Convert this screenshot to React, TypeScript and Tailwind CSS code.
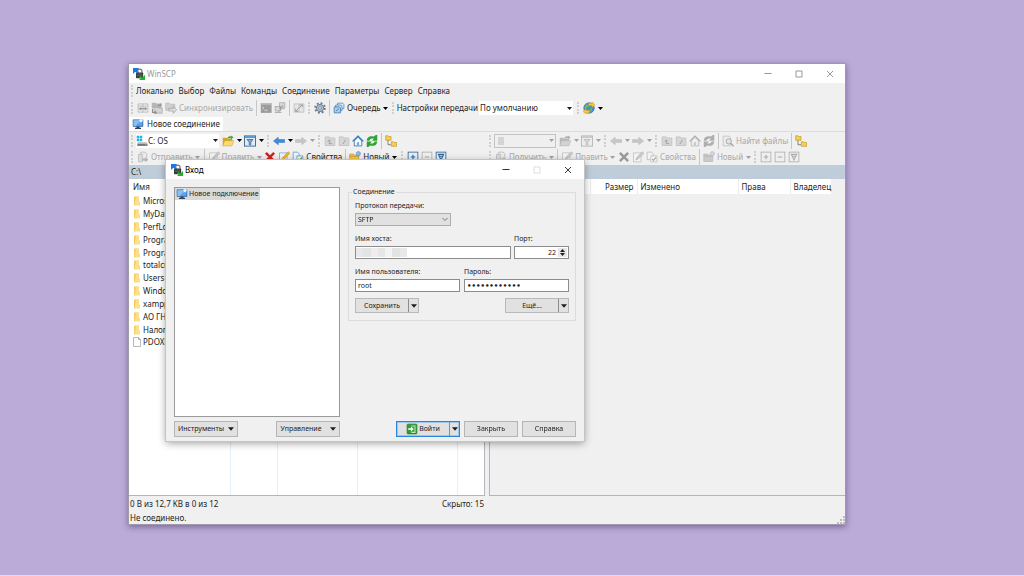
import React, { useState } from "react";
import { clsx } from "clsx";

type IconProps = { off?: boolean };

const svgProps = {
  viewBox: "0 0 16 16",
  className: "h-3 w-3 shrink-0",
  "aria-hidden": true,
} as const;

function AppIcon() {
  return (
    <svg {...svgProps}>
      <path d="M0 0h8L6 3l2 3-2 1-3-2-3 3z" fill="#1677e8" />
      <path d="M6 7V4.500a3 3 0 0 1 6 0V7" fill="none" stroke="#777" strokeWidth="1.600" />
      <rect x="4" y="6" width="9.500" height="7.500" rx="1" fill="#3a3a3a" />
      <path d="M5 8h7M5 10h7" stroke="#777" strokeWidth=".7" />
      <path d="M16 16H8l2-2-2-2 2-1.500 3 2L16 9z" fill="#19b52c" />
    </svg>
  );
}

function MonitorIcon() {
  return (
    <svg {...svgProps}>
      <path d="M6 11h4v2h2v1.500H4V13h2z" fill="#38414d" />
      <rect x="1" y="2" width="14" height="9.500" rx=".8" fill="#2d5f9e" />
      <rect x="2" y="3" width="12" height="7.500" fill="#5aa5ef" />
      <path d="M2 3h9l-6 7.500H2z" fill="#85c0f8" />
      <path d="M12 0l1 2 2 .5-1.500 1.500.5 2-2-1-2 1 .5-2L9 2.500 11 2z" fill="#f4f6f8" />
    </svg>
  );
}

function CompareIcon() {
  return (
    <svg {...svgProps}>
      <path d="M1.500 2.500h13v11h-13zM8 2.500v11M1.500 5.500h13" fill="#ededed" stroke="#b2b2b2" />
      <path d="M2.500 9h11M5 7v4M11 7v4" stroke="#8e8e8e" strokeWidth="1.400" />
    </svg>
  );
}

function SyncFoldersIcon() {
  return (
    <svg {...svgProps}>
      <path d="M1 1h5l1 1h7v6H1z" fill="#b6b6b6" />
      <path d="M4 7h5l1 1h5v7H4z" fill="#d4d4d4" stroke="#a0a0a0" strokeWidth=".8" />
      <path d="M2 9v5h5M5 12l2 2-2 1.500M9 4.500h4V2" fill="none" stroke="#8f8f8f" strokeWidth="1.500" />
    </svg>
  );
}

function SyncIcon() {
  return (
    <svg {...svgProps}>
      <path d="M1 1.500h5L7 3h6v8H1z" fill="#cfcfcf" stroke="#b0b0b0" strokeWidth=".8" />
      <path d="M5 8.500h6V5.500l4.500 5L11 15v-3H5z" fill="#dedede" stroke="#a0a0a0" />
    </svg>
  );
}

function TerminalIcon() {
  return (
    <svg {...svgProps}>
      <rect x="1" y="1.500" width="14.500" height="13" fill="#9b9b9b" />
      <path d="M1 1.500h14.500v2H1z" fill="#c0c0c0" />
      <path d="M3 6l2 2-2 2M6 11h4" fill="none" stroke="#e6e6e6" strokeWidth="1.100" />
    </svg>
  );
}

function PuttyIcon() {
  return (
    <svg {...svgProps}>
      <rect x="7.500" y="1" width="7" height="6" fill="#d8d8d8" stroke="#a5a5a5" />
      <rect x="1.500" y="6" width="7" height="6" fill="#d8d8d8" stroke="#a5a5a5" />
      <path d="M12 5L7 8l3 1-4 4" fill="none" stroke="#989898" strokeWidth="1.300" />
      <path d="M9.500 9h5M1 14h9" stroke="#b0b0b0" strokeWidth="1.500" />
    </svg>
  );
}

function SyncBrowseIcon() {
  return (
    <svg {...svgProps}>
      <path d="M1.500 2.500h13v11h-13zM8 2.500v11" fill="#e6e6e6" stroke="#b8b8b8" />
      <path d="M3.500 12.500l9-9M9 4h3.500v3M7 12.500H3.500V9" fill="none" stroke="#9e9e9e" strokeWidth="1.300" />
    </svg>
  );
}

function GearIcon() {
  return (
    <svg {...svgProps}>
      <circle cx="8" cy="8" r="6.500" fill="none" stroke="#66788c" strokeWidth="2.400" strokeDasharray="2.550 2.550" />
      <circle cx="8" cy="8" r="4.800" fill="#b6c4d2" stroke="#66788c" strokeWidth="1.300" />
      <circle cx="8" cy="8" r="1.900" fill="#f0f0f0" stroke="#66788c" />
    </svg>
  );
}

function QueueIcon() {
  return (
    <svg {...svgProps}>
      <path d="M6 1.500h7l1.500 1.500v6H6z" fill="#d9ebfa" stroke="#4f87b8" />
      <path d="M3.500 4h7L12 5.500v6H3.500z" fill="#c2def5" stroke="#4f87b8" />
      <path d="M1.500 6.500h7L10 8v6.500H1.500z" fill="#a6cdee" stroke="#3f78aa" />
      <path d="M4 12l4-3" stroke="#3f78aa" />
    </svg>
  );
}

function GlobeIcon() {
  return (
    <svg {...svgProps}>
      <circle cx="8" cy="8" r="7" fill="#3f8fd6" stroke="#2c6ca8" strokeWidth=".8" />
      <path d="M3 4l4-1 1 3-3 2-1 3-2-3zM9 9l3-1v3l-2 2z" fill="#78b648" />
      <path d="M7 1.500h5V0l4 3.500L12 7.500V5H8zM9 11H4V8.500L0 12.500 4 16v-1.500h5z" fill="#f2c744" stroke="#b98c1c" strokeWidth=".6" />
    </svg>
  );
}

function DriveIcon() {
  return (
    <svg {...svgProps}>
      <path d="M1 1h3.300v3.300H1zM5 1h3.300v3.300H5zM1 5h3.300v3.300H1zM5 5h3.300v3.300H5z" fill="#17b4e8" />
      <path d="M2 9.500h12l1.500 2.500v2.500h-14z" fill="#b9b9b9" />
      <path d="M2 12h13v2.500H2z" fill="#777" />
      <path d="M12 13h2" stroke="#6ee06e" />
    </svg>
  );
}

function OpenFolderIcon({ off }: IconProps) {
  return (
    <svg {...svgProps}>
      <path d="M1 3.500h5L7 5h6.500v9.500H1z" fill={off ? "#b9b9b9" : "#d9a520"} />
      <path d="M3.500 7.500H16l-3 7H1z" fill={off ? "#d2d2d2" : "#fbdc6d"} stroke={off ? "#b0b0b0" : "#c4962b"} strokeWidth=".6" />
      <path d="M7 5c1-3 3-3.500 5-3V.5L15.500 3 12 6V4.500C10 4 9 4.500 7 5z" fill={off ? "#b0b0b0" : "#4aa938"} />
    </svg>
  );
}

function FilterIcon({ off }: IconProps) {
  const c = off ? "#b5b5b5" : "#39628c";
  return (
    <svg {...svgProps}>
      <rect x=".7" y="1.200" width="14.600" height="13.600" fill={off ? "#ececec" : "#dcecfa"} stroke={c} strokeWidth="1.200" />
      <path d="M1 1.500h14V4H1z" fill={off ? "#cacaca" : "#5a97cf"} />
      <path d="M4 6h8L9 9.500V13H7V9.500z" fill={off ? "#d9d9d9" : "#8fa9c2"} stroke={c} />
    </svg>
  );
}

function ArrowIcon({ off, back }: IconProps & { back?: boolean }) {
  return (
    <svg {...svgProps}>
      <path
        d={back ? "M.5 8L7 3v3h8.500v4H7v3z" : "M15.500 8L9 3v3H.5v4H9v3z"}
        fill={off ? "#c6c6c6" : "#3b8ede"}
        stroke={off ? "#b8b8b8" : "#2568ad"}
        strokeWidth=".6"
      />
    </svg>
  );
}

function FolderUpIcon({ root }: { root?: boolean }) {
  return (
    <svg {...svgProps}>
      <path d="M1.500 2.500h5.500l1 1.500h6.500V14h-13z" fill="#d6d6d6" stroke="#bdbdbd" />
      <path d={root ? "M6.500 12L10 6.500" : "M5 8.500L7 6.500l2 2M7 7v4.500h4"} fill="none" stroke="#9c9c9c" strokeWidth="1.200" />
    </svg>
  );
}

function HomeIcon({ off }: IconProps) {
  return (
    <svg {...svgProps}>
      <path d="M3 8v6.500h10V8L8 3z" fill={off ? "#efefef" : "#f8fbff"} stroke={off ? "#b5b5b5" : "#2f6cab"} strokeWidth="1.100" />
      <path d="M.8 8.500L8 1.500l7.200 7" fill="none" stroke={off ? "#aeaeae" : "#2f77c0"} strokeWidth="1.800" />
      <path d="M6.500 14V9.500h3V14z" fill={off ? "#c8c8c8" : "#7fa9d4"} />
    </svg>
  );
}

function RefreshIcon({ off }: IconProps) {
  return (
    <svg {...svgProps}>
      <g fill={off ? "#aeaeae" : "#2fa336"}>
        <path d="M1 7.500C1 3 5 .5 10.500 2L13 0h2v7.500H8l2.500-2.500C7.500 4 5.500 5 4.500 7.500z" />
        <path d="M15 8.500c0 4.500-4 7-9.500 5.500L3 16H1V8.500h7L5.500 11c3 1 5 0 6-2.500z" />
      </g>
    </svg>
  );
}

function TreeIcon() {
  return (
    <svg {...svgProps}>
      <path d="M4 6v7h4" fill="none" stroke="#5f5f5f" />
      <path d="M1 1h3l1 1h3v5H1zM8.500 9h3l1 1h3v5h-7z" fill="#f7cf51" stroke="#b98f1e" strokeWidth=".8" />
    </svg>
  );
}

function FindIcon() {
  return (
    <svg {...svgProps}>
      <path d="M1.500 1.500h8l2 2v11h-10z" fill="#ececec" stroke="#bdbdbd" />
      <circle cx="9" cy="8.500" r="3.500" fill="#e3e3e3" stroke="#a5a5a5" strokeWidth="1.200" />
      <path d="M11.500 11l4 4" stroke="#a5a5a5" strokeWidth="1.800" />
    </svg>
  );
}

function TransferIcon() {
  return (
    <svg {...svgProps}>
      <path d="M5 1.500h6l2 2v8H5z" fill="#ebebeb" stroke="#b5b5b5" />
      <path d="M2 4.500h5v10H2z" fill="#dedede" stroke="#b5b5b5" />
      <path d="M7 10h4V8l4 3.500-4 3.500v-2H7z" fill="#b5b5b5" />
    </svg>
  );
}

function EditIcon({ off }: IconProps) {
  return (
    <svg {...svgProps}>
      <path d="M2 2.500h10v12H2z" fill="#f4f4f4" stroke={off ? "#bdbdbd" : "#7fa3c5"} />
      <path d="M5 12l1-3 7.500-8L16 3l-8 8z" fill={off ? "#c9c9c9" : "#f2b530"} stroke={off ? "#adadad" : "#b27e1b"} strokeWidth=".6" />
    </svg>
  );
}

function DeleteIcon({ off }: IconProps) {
  return (
    <svg {...svgProps}>
      <path d="M2.500 2.500l11 11M13.500 2.500l-11 11" stroke={off ? "#9a9a9a" : "#d32222"} strokeWidth="3.400" />
    </svg>
  );
}

function PropsIcon({ off }: IconProps) {
  const c = off ? "#b8b8b8" : "#5e93c4";
  return (
    <svg {...svgProps}>
      <path d="M1.500 1.500h6l2 2v8h-8z" fill="#eef3f8" stroke={c} />
      <path d="M6.500 6.500h8v8h-8z" fill="#f6f6f6" stroke={c} />
      <path d="M8.500 10.500l1.700 2 3-4" fill="none" stroke={off ? "#a5a5a5" : "#3c9a3c"} strokeWidth="1.400" />
    </svg>
  );
}

function NewFolderIcon({ off }: IconProps) {
  return (
    <svg {...svgProps}>
      <path d="M1 4h5l1 1.500h6V14H1z" fill={off ? "#cacaca" : "#f5ca4b"} stroke={off ? "#b2b2b2" : "#bd9124"} strokeWidth=".8" />
      <path d="M1 7h12" stroke={off ? "#b2b2b2" : "#bd9124"} />
      <circle cx="12.500" cy="3.500" r="2.800" fill={off ? "#d6d6d6" : "#8dbbe8"} stroke={off ? "#b5b5b5" : "#4b82b8"} strokeWidth=".7" />
    </svg>
  );
}

function BoxIcon({ off, kind }: IconProps & { kind: "plus" | "minus" | "invert" }) {
  const paths = { plus: "M8 5v6M5 8h6", minus: "M5 8h6", invert: "M4.500 4.500L8 12l3.500-7.500zM6 7h4" };
  const c = off ? "#adadad" : "#2f6594";
  return (
    <svg {...svgProps}>
      <rect x="1.500" y="1.500" width="13" height="13" fill={off ? "#efefef" : "#e3effa"} stroke={c} strokeWidth="1.100" />
      <path d={paths[kind]} fill="none" stroke={c} strokeWidth="1.500" />
    </svg>
  );
}

function LoginIcon() {
  return (
    <svg {...svgProps}>
      <rect x="1.500" y="1.500" width="13" height="13" rx="1" fill="#2ca02c" stroke="#1d7f1d" />
      <path d="M7 4h5v8.500H7" fill="none" stroke="#bce8bc" strokeWidth="1.400" />
      <path d="M3 7h3.500V4.500L10.500 8l-4 3.500V9H3z" fill="#fff" />
    </svg>
  );
}

function FolderIcon() {
  return (
    <svg viewBox="0 0 8 10" className="h-2.5 w-2 shrink-0" aria-hidden>
      <path d="M1 .5h4.500v8L1 9.500z" fill="#f3cd62" />
      <path d="M3 .5h3v5h1v4H1.500z" fill="#fbdf8a" />
    </svg>
  );
}

function FileIcon() {
  return (
    <svg viewBox="0 0 8 10" className="h-2.5 w-2 shrink-0" aria-hidden>
      <path d="M.5.5h5l2 2v7h-7zM5.500.5v2h2" fill="#fff" stroke="#999" strokeWidth=".7" />
    </svg>
  );
}

function Caret({ className = "h-[3px] w-[5px]" }: { className?: string }) {
  return (
    <svg viewBox="0 0 10 6" className={clsx("shrink-0", className)} aria-hidden>
      <path d="M0 0h10L5 6z" fill="currentColor" />
    </svg>
  );
}

const bigCaret = "h-1 w-[6px]";

const Grip = () => <span className="mx-[2px] h-3 w-[3px] shrink-0 border-l-2 border-dotted border-[#cfcfcf]" />;
const Sep = () => <span className="mx-[2px] h-4 w-px shrink-0 bg-[#c6c6c6]" />;

type ToolProps = {
  label: string;
  icon?: React.ReactNode;
  text?: boolean;
  off?: boolean;
};

function Tool({ label, icon, text, off }: ToolProps) {
  return (
    <button type="button" disabled={off} aria-label={label} className={clsx("flex h-4 shrink-0 items-center", off && "text-[#a8a8a8]")}>
      {icon && <span className="flex w-[14px] justify-center">{icon}</span>}
      {text && <span className="px-px">{label}</span>}
    </button>
  );
}

function Drop({ label, off }: { label: string; off?: boolean }) {
  return (
    <button
      type="button"
      disabled={off}
      aria-label={label}
      className={clsx("flex h-4 w-2 shrink-0 items-center justify-center", off ? "text-[#a0a0a0]" : "text-black")}
    >
      <Caret />
    </button>
  );
}

function PaneToolbar({ off }: { off?: boolean }) {
  return (
    <div className="h-[34px] border-t border-[#dcdcdc]">
      <div className="flex h-[17px] items-center">
        <Grip />
        <div
          className={clsx(
            "relative mr-[2px] flex h-[14px] shrink-0 items-center",
            off ? "w-[62px] border border-[#c3c3c3] bg-[#efefef]" : "w-[83px] bg-white"
          )}
        >
          <span className="flex w-3 shrink-0 justify-center">
            {off ? <span className="h-2 w-[6px] bg-[#d4d4d4]" /> : <DriveIcon />}
          </span>
          <select aria-label={off ? "Удалённый каталог" : "Диск"} disabled={off} className="h-3 min-w-0 flex-1 appearance-none bg-transparent outline-none">
            <option>{off ? "" : "C: OS"}</option>
          </select>
          <span className={clsx("pointer-events-none absolute inset-y-0 right-0 flex w-[6px] items-center", off && "text-[#a0a0a0]")}>
            <Caret />
          </span>
        </div>
        <Tool label="Открыть каталог" icon={<OpenFolderIcon off={off} />} off={off} />
        <Drop label="Закладки" off={off} />
        <Tool label="Фильтр" icon={<FilterIcon off={off} />} off={off} />
        <Drop label="Фильтры" off={off} />
        <Grip />
        <Tool label="Назад" icon={<ArrowIcon back off={off} />} off={off} />
        <Drop label="История назад" off={off} />
        <Tool label="Вперёд" icon={<ArrowIcon off />} off />
        <Drop label="История вперёд" off />
        <Grip />
        <Tool label="Вверх" icon={<FolderUpIcon />} off />
        <Tool label="Корень" icon={<FolderUpIcon root />} off />
        <Tool label="Домой" icon={<HomeIcon off={off} />} off={off} />
        <Tool label="Обновить" icon={<RefreshIcon off={off} />} off={off} />
        <Sep />
        {off && (
          <>
            <Tool label="Найти файлы" icon={<FindIcon />} text off />
            <Sep />
          </>
        )}
        <Tool label="Дерево" icon={<TreeIcon />} />
      </div>
      <div className="flex h-4 items-center">
        <Grip />
        <Tool label={off ? "Получить" : "Отправить"} icon={<TransferIcon />} text off />
        <Drop label="Параметры копирования" off />
        <Sep />
        <Tool label="Править" icon={<EditIcon off />} text off />
        <Drop label="Редакторы" off />
        <Tool label="Удалить" icon={<DeleteIcon off={off} />} off={off} />
        <Tool label="Переименовать" icon={<EditIcon off={off} />} off={off} />
        <Tool label="Свойства" icon={<PropsIcon off={off} />} text off={off} />
        <Sep />
        <Tool label="Новый" icon={<NewFolderIcon off={off} />} text off={off} />
        <Drop label="Создать" off={off} />
        <Grip />
        <Tool label="Выделить" icon={<BoxIcon kind="plus" off={off} />} off={off} />
        <Tool label="Снять выделение" icon={<BoxIcon kind="minus" off />} off />
        <Tool label="Обратить выделение" icon={<BoxIcon kind="invert" off={off} />} off={off} />
      </div>
    </div>
  );
}

function WindowControls({ dialog }: { dialog?: boolean }) {
  const stroke = dialog ? "stroke-[#333333]" : "stroke-[#999999]";
  return (
    <div className={clsx("ml-auto flex self-stretch", dialog && "pr-px")}>
      <button type="button" aria-label="Свернуть" className="flex w-[31px] items-center justify-center">
        <svg viewBox="0 0 8 8" className={clsx("h-2 w-2 fill-none", stroke)} aria-hidden>
          <path d="M.5 3.500h7" />
        </svg>
      </button>
      <button type="button" aria-label="Развернуть" disabled={dialog} className="flex w-[31px] items-center justify-center">
        <svg viewBox="0 0 8 8" className={clsx("h-2 w-2 fill-none", dialog ? "stroke-[#dddddd]" : stroke)} aria-hidden>
          <path d="M1 1h6v6H1z" />
        </svg>
      </button>
      <button type="button" aria-label="Закрыть окно" className="flex w-[31px] items-center justify-center">
        <svg viewBox="0 0 8 8" className={clsx("h-2 w-2 fill-none", stroke)} aria-hidden>
          <path d="M1 1l6 6M7 1L1 7" />
        </svg>
      </button>
    </div>
  );
}

const menu = ["Локально", "Выбор", "Файлы", "Команды", "Соединение", "Параметры", "Сервер", "Справка"];

const files = [
  "Microsoft",
  "MyData",
  "PerfLogs",
  "Program Files",
  "Program Files (x86)",
  "totalcmd",
  "Users",
  "Windows",
  "xampp",
  "АО ГНИВЦ",
  "Налогоплательщик",
  "PDOXUSRS.NET",
];

function LocalPane() {
  return (
    <section className="flex w-[358px] shrink-0 flex-col">
      <PaneToolbar />
      <div className="flex h-[14px] items-center bg-[#bfcdda] px-[2px]">C:\</div>
      <div className="mr-[2px] min-h-0 flex-1 border-r border-b border-[#b4b4bc] bg-white">
        <table className="h-full w-full table-fixed text-left">
          <colgroup>
            <col className="w-[101px]" />
            <col className="w-[47px]" />
            <col className="w-20" />
            <col className="w-[100px]" />
            <col />
          </colgroup>
          <thead>
            <tr className="h-[15px]">
              <th className="pl-1 font-normal">Имя</th>
              <td />
              <td />
              <td />
              <td />
            </tr>
          </thead>
          <tbody>
            {files.map((name) => (
              <tr key={name} className="h-[13px] nth-[6n]:h-3">
                <td className="overflow-hidden border-r border-[#e4f0fa] p-0">
                  <span className="flex items-center gap-[2px] pl-1 whitespace-nowrap">
                    {name.startsWith("PDOX") ? <FileIcon /> : <FolderIcon />}
                    {name}
                  </span>
                </td>
                <td className="border-r border-[#e4f0fa]" />
                <td className="border-r border-[#e4f0fa]" />
                <td className="border-r border-[#e4f0fa]" />
                <td />
              </tr>
            ))}
            <tr>
              <td className="border-r border-[#e4f0fa]" />
              <td className="border-r border-[#e4f0fa]" />
              <td className="border-r border-[#e4f0fa]" />
              <td className="border-r border-[#e4f0fa]" />
              <td />
            </tr>
          </tbody>
        </table>
      </div>
    </section>
  );
}

function RemotePane() {
  return (
    <section className="flex min-w-0 flex-1 flex-col">
      <PaneToolbar off />
      <div className="h-[14px] bg-[#bfcdda]" />
      <div className="ml-[2px] flex-1 border-b border-l border-[#b4b4bc]">
        <table className="w-[341px] table-fixed bg-white text-left">
          <thead>
            <tr className="h-[15px]">
              <th className="w-[100px] border-r border-[#ececec]" />
              <th className="w-[47px] border-r border-[#ececec] pr-[3px] text-right font-normal">Размер</th>
              <th className="w-[101px] border-r border-[#ececec] pl-[3px] font-normal">Изменено</th>
              <th className="w-[52px] border-r border-[#ececec] pl-[3px] font-normal">Права</th>
              <th className="pl-[3px] font-normal">Владелец</th>
            </tr>
          </thead>
        </table>
      </div>
    </section>
  );
}

const btn = "flex h-4 items-center justify-center border border-[#b5b5b5] bg-[#e1e1e1]";
const field = "h-[13px] w-full border bg-white px-[2px] outline-none";

function SplitButton({ label }: { label: string }) {
  return (
    <div className="flex h-[15px] w-16 border border-[#b9b9b9] bg-[#e1e1e1]">
      <button type="button" className="flex flex-1 items-center justify-center">{label}</button>
      <button type="button" aria-label={label + " — меню"} className="flex w-[10px] items-center justify-center border-l border-[#8c8c8c]">
        <Caret className={bigCaret} />
      </button>
    </div>
  );
}

// greyed-out blocks that hide the address in the host field
const mosaic = ["bg-[#e9e9e9]", "bg-[#e4e4e4]", "bg-[#eeeeee]", "bg-[#e6e6e6]", "bg-[#f3f3f3]", "bg-[#e3e3e3]", "bg-[#e9e9e9]"];

function LoginDialog() {
  const [host, setHost] = useState("");
  const [port, setPort] = useState("22");
  const [user, setUser] = useState("root");
  const [password, setPassword] = useState("passwordpass");

  return (
    <div
      role="dialog"
      aria-label="Вход"
      className="absolute top-24 left-[37px] flex w-[418px] flex-col bg-[#f0f0f0] font-['Noto_Sans',sans-serif] text-[7px] leading-[10px] shadow-[0_2px_8px_rgba(0,0,0,0.4)] outline outline-[#c4c4c4]"
    >
      <div className="flex h-[19px] items-center bg-white pl-[5px] text-[8px] text-black">
        <AppIcon />
        <span className="pl-[2px]">Вход</span>
        <WindowControls dialog />
      </div>

      <form className="px-2 pt-2 pb-1" onSubmit={(e) => e.preventDefault()}>
        <div className="flex gap-2">
          <div className="h-[230px] w-[166px] shrink-0 border border-[#9a9a9a] bg-white">
            <button type="button" className="flex h-3 items-center gap-px bg-[#d9d9d9] px-px">
              <MonitorIcon />
              Новое подключение
            </button>
          </div>

          <fieldset className="min-w-0 flex-1 self-start border border-[#dcdcdc] px-[6px] pb-[7px]">
            <legend className="-ml-[3px] px-px">Соединение</legend>
            <div className="flex flex-col gap-2 pt-1">
              <div className="flex flex-col gap-[2px]">
                <label htmlFor="protocol">Протокол передачи:</label>
                <div className="relative w-24">
                  <select id="protocol" className="h-[13px] w-full appearance-none border border-[#adadad] bg-[#e1e1e1] px-[2px]">
                    <option>SFTP</option>
                  </select>
                  <svg viewBox="0 0 8 8" className="pointer-events-none absolute top-[3px] right-[3px] h-[6px] w-[6px] fill-none stroke-[#555555]" aria-hidden>
                    <path d="M.5 2.500L4 6l3.500-3.500" />
                  </svg>
                </div>
              </div>
              <div className="flex gap-[3px]">
                <div className="flex w-[156px] shrink-0 flex-col gap-[2px]">
                  <label htmlFor="host">Имя хоста:</label>
                  <div className="relative">
                    <input id="host" value={host} onChange={(e) => setHost(e.target.value)} className={clsx(field, "border-[#8c8c8c]")} />
                    {!host && (
                      <div className="pointer-events-none absolute top-[2px] left-px flex h-[9px] w-[51px]">
                        {mosaic.map((c, i) => (
                          <span key={i} className={clsx("flex-1", c)} />
                        ))}
                      </div>
                    )}
                  </div>
                </div>
                <div className="flex min-w-0 flex-1 flex-col gap-[2px]">
                  <label htmlFor="port">Порт:</label>
                  <div className="flex h-[13px] border border-[#8c8c8c] bg-white p-px">
                    <input id="port" value={port} onChange={(e) => setPort(e.target.value)} className="min-w-0 flex-1 pr-[2px] text-right outline-none" />
                    <div className="flex w-[9px] flex-col bg-[#e6e6e6]">
                      <button type="button" aria-label="Больше" onClick={() => setPort(String(+port + 1))} className="flex flex-1 items-center justify-center">
                        <Caret className="h-[3px] w-[5px] rotate-180" />
                      </button>
                      <button type="button" aria-label="Меньше" onClick={() => setPort(String(+port - 1))} className="flex flex-1 items-center justify-center">
                        <Caret />
                      </button>
                    </div>
                  </div>
                </div>
              </div>
              <div className="flex gap-1">
                <div className="flex flex-1 flex-col gap-[2px]">
                  <label htmlFor="user">Имя пользователя:</label>
                  <input
                    id="user"
                    autoFocus
                    value={user}
                    onChange={(e) => setUser(e.target.value)}
                    className={clsx(field, "border-[#4a9be3]")}
                  />
                </div>
                <div className="flex flex-1 flex-col gap-[2px]">
                  <label htmlFor="password">Пароль:</label>
                  <input
                    id="password"
                    type="password"
                    value={password}
                    onChange={(e) => setPassword(e.target.value)}
                    className={clsx(field, "border-[#8c8c8c] font-['DejaVu_Sans',sans-serif] font-bold")}
                  />
                </div>
              </div>
            </div>
            <div className="flex justify-between pt-[6px]">
              <SplitButton label="Сохранить" />
              <SplitButton label="Ещё..." />
            </div>
          </fieldset>
        </div>

        <div className="flex gap-1 pt-1">
          <div className="flex w-[166px] justify-between">
            <button type="button" className={clsx(btn, "w-16 gap-1")}>
              Инструменты
              <Caret className={bigCaret} />
            </button>
            <button type="button" className={clsx(btn, "w-16 gap-2")}>
              Управление
              <Caret className={bigCaret} />
            </button>
          </div>
          <div className="ml-auto flex h-4 w-16 border border-[#2a86db] bg-[#e1e1e1] shadow-[inset_0_0_0_1px_#9cc8f0]">
            <button type="submit" className="flex flex-1 items-center justify-center gap-px">
              <LoginIcon />
              Войти
            </button>
            <button type="button" aria-label="Войти — меню" className="flex w-[10px] items-center justify-center border-l border-[#8c8c8c]">
              <Caret className={bigCaret} />
            </button>
          </div>
          <button type="button" className={clsx(btn, "w-[54px]")}>Закрыть</button>
          <button type="button" className={clsx(btn, "w-[54px]")}>Справка</button>
        </div>
      </form>
    </div>
  );
}

export default function App() {
  return (
    <main className="flex h-screen flex-col border-b border-[#e3dcf0] bg-[#bbabd9] pt-[63px] pr-[178px] pb-[50px] pl-32 font-['Noto_Sans',sans-serif] text-[8px] leading-[10px] text-[#1c1c1c]">
      <div className="relative flex min-h-0 flex-1 flex-col border border-[#a09aa8] bg-[#f0f0f0] shadow-[0_2px_6px_rgba(40,20,80,0.45)]">
        <header className="flex h-[19px] items-center bg-white pl-1 text-[#999999]">
          <AppIcon />
          <h1 className="pl-[2px]">WinSCP</h1>
          <WindowControls />
        </header>

        <nav className="flex h-4 items-center">
          <Grip />
          {menu.map((item) => (
            <button key={item} type="button" className="pr-[5px]">{item}</button>
          ))}
        </nav>

        <div className="flex h-[18px] items-center">
          <Grip />
          <Tool label="Сравнить" icon={<CompareIcon />} off />
          <Tool label="Синхронизировать каталоги" icon={<SyncFoldersIcon />} off />
          <Tool label="Синхронизировать" icon={<SyncIcon />} text off />
          <Sep />
          <Tool label="Терминал" icon={<TerminalIcon />} off />
          <Tool label="PuTTY" icon={<PuttyIcon />} off />
          <Sep />
          <Tool label="Синхронный просмотр" icon={<SyncBrowseIcon />} off />
          <Grip />
          <Tool label="Настройки" icon={<GearIcon />} />
          <Sep />
          <Tool label="Очередь" icon={<QueueIcon />} text />
          <Drop label="Очередь — меню" />
          <Grip />
          <label htmlFor="preset" className="pr-px">Настройки передачи</label>
          <div className="relative mr-[2px] w-[94px]">
            <select id="preset" className="h-[14px] w-full appearance-none bg-white pl-px outline-none">
              <option>По умолчанию</option>
            </select>
            <span className="pointer-events-none absolute inset-y-0 right-0 flex w-[6px] items-center">
              <Caret />
            </span>
          </div>
          <Grip />
          <Tool label="Обновления" icon={<GlobeIcon />} />
          <Drop label="Обновления — меню" />
        </div>

        <div className="flex h-[14px]">
          <button type="button" className="flex items-center gap-[3px] bg-white px-[3px]">
            <MonitorIcon />
            Новое соединение
          </button>
        </div>

        <div className="flex min-h-0 flex-1">
          <LocalPane />
          <RemotePane />
        </div>

        <footer>
          <div className="flex h-[14px] w-[358px] items-center justify-between pt-[2px] pr-[3px] pl-px">
            <span>0 B из 12,7 KB в 0 из 12</span>
            <span>Скрыто: 15</span>
          </div>
          <div className="flex h-[14px] items-center justify-between pl-px">
            <span className="pt-[2px]">Не соединено.</span>
            <svg viewBox="0 0 8 8" className="h-2 w-2 self-end fill-[#bdbdbd]" aria-hidden>
              <path d="M6 0h2v2H6zM3 3h2v2H3zM6 3h2v2H6zM0 6h2v2H0zM3 6h2v2H3zM6 6h2v2H6z" />
            </svg>
          </div>
        </footer>

        <LoginDialog />
      </div>
    </main>
  );
}
